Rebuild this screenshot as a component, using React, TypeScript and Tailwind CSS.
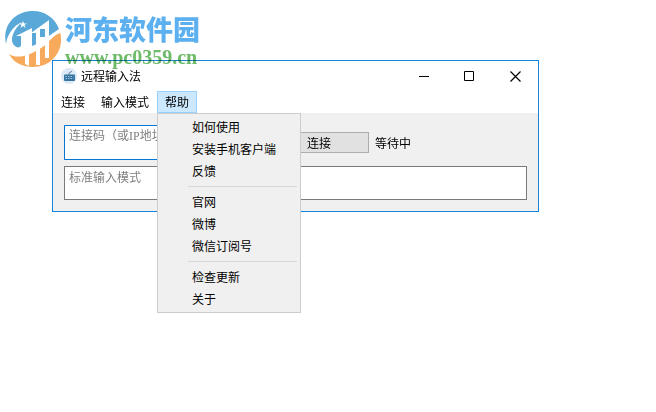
import React from "react";

const menuGroups: string[][] = [
  ["如何使用", "安装手机客户端", "反馈"],
  ["官网", "微博", "微信订阅号"],
  ["检查更新", "关于"],
];

function SiteLogo() {
  return (
    <svg className="h-14 w-14 shrink-0" viewBox="0 0 56 56" aria-hidden="true">
      <path d="M1 33C-3 14 10 0 28 0c12 0 22 7 26 18-5 3-9 8-13 13-8 9-20 14-31 12-5-1-7-4-6-9-1-1-2-2-3-1z" fill="#59a8d8" />
      <path d="M4 43c13 4 29-2 38-11 5-5 9-9 13-11 5 18-8 35-27 35-11 0-20-5-24-13z" fill="#f7aa5b" />
      <path d="M1 33C2 24 8 15 17 11 9 18 5 27 8 33c4 7 18 4 27-2 8-5 13-10 20-12v3c-6 2-10 7-15 12C27 44 13 49 4 43c-2-2-3-6-3-10z" fill="#fff" />
      <path d="M11 25 27 17v20l-17 2 6-4V25z" fill="#fff" />
      <path d="M26 22 44 9v38h-4V32h-5v22h-4V22z" fill="#fff" />
      <path d="M35 18h5v8h-5z" fill="#59a8d8" />
      <path d="M20 43h4v12l-4-2z" fill="#fff" />
      <path d="m18 10 1 2.500h3l-2.500 1.500 1 3-2.500-2-2.500 2 1-3-2.500-1.500h3z" fill="#fff" />
    </svg>
  );
}

function KeyboardIcon() {
  return (
    <svg className="h-4 w-4" viewBox="0 0 16 16" aria-hidden="true">
      <circle cx="8" cy="8" r="8" fill="#dce9f7" />
      <path d="M8 7V5.500c0-1.500 2.500-.5 2.500-2.500" fill="none" stroke="#52748f" />
      <rect x="3" y="6.500" width="11" height="6.500" rx="1" fill="#35739f" />
      <path d="M4.500 8.500h8M4.500 10.500h8" stroke="#a5c8e0" strokeDasharray="1.500 1" />
    </svg>
  );
}

function Watermark() {
  return (
    <div className="pointer-events-none absolute left-[5px] top-[11px] flex gap-1 mix-blend-multiply">
      <SiteLogo />
      <div className="whitespace-nowrap">
        <div className="font-['Noto_Sans_CJK_SC',sans-serif] text-[27px] font-black leading-9 text-[#5cb0ef]">河东软件园</div>
        <div className="font-['Liberation_Serif',serif] text-[20px] font-bold leading-5 text-[#6dbb68]">www.pc0359.cn</div>
      </div>
    </div>
  );
}

function TitleBar() {
  return (
    <header className="flex h-[30px] items-center justify-between pl-2">
      <div className="flex items-center gap-1">
        <KeyboardIcon />
        <h1>远程输入法</h1>
      </div>
      <div className="flex h-7">
        <button type="button" aria-label="最小化" className="flex w-[46px] items-center justify-center">
          <svg className="h-[11px] w-[11px]" viewBox="0 0 11 11"><path d="M1 5.500h10" stroke="#000" /></svg>
        </button>
        <button type="button" aria-label="最大化" className="flex w-[46px] items-center justify-center">
          <svg className="h-[11px] w-[11px]" viewBox="0 0 11 11"><path d="M.5.5h9v9h-9z" fill="none" stroke="#000" /></svg>
        </button>
        <button type="button" aria-label="关闭" className="flex w-[46px] items-center justify-center">
          <svg className="h-[11px] w-[11px]" viewBox="0 0 11 11"><path d="m.5.5 10 10m0-10-10 10" stroke="#000" strokeWidth="1.2" /></svg>
        </button>
      </div>
    </header>
  );
}

function HelpMenu() {
  return (
    <div role="menu" aria-label="帮助" className="absolute left-0 top-full z-10 w-36 border border-[#cccccc] bg-[#f0f0f0] py-0.5">
      {menuGroups.map((group, index) => (
        <React.Fragment key={group[0]}>
          {index > 0 && <hr className="my-1 ml-[30px] mr-[3px] border-[#d7d7d7]" />}
          {group.map((label) => (
            <button key={label} type="button" role="menuitem" className="block h-[22px] w-full pl-[34px] text-left leading-[22px]">
              {label}
            </button>
          ))}
        </React.Fragment>
      ))}
    </div>
  );
}

function MenuBar() {
  return (
    <nav className="flex h-[22px]">
      <button type="button" className="px-2">连接</button>
      <button type="button" className="px-2">输入模式</button>
      <div className="relative">
        <button type="button" aria-expanded="true" className="h-full border border-[#99d1ff] bg-[#cce8ff] px-[7px]">帮助</button>
        <HelpMenu />
      </div>
    </nav>
  );
}

export default function App() {
  return (
    <main className="relative min-h-screen bg-white pl-[52px] pr-4 pt-[60px] font-['Noto_Sans_CJK_SC',sans-serif] text-xs text-black">
      <section className="w-full max-w-[487px] border border-[#1883d7] bg-white">
        <TitleBar />
        <MenuBar />
        <div className="flex flex-col gap-1.5 bg-[#f0f0f0] px-[11px] pb-[11px] pt-3">
          <div className="flex items-center gap-1.5">
            <textarea
              aria-label="连接码"
              placeholder="连接码（或IP地址）"
              className="h-[35px] w-[199px] resize-none overflow-hidden border border-[#0078d7] bg-white px-1 py-0.5 font-['Liberation_Serif','Noto_Sans_CJK_SC',serif] leading-4 placeholder:text-[#808080]"
            />
            <button type="button" className="h-[21px] w-[100px] border border-[#adadad] bg-[#e1e1e1]">连接</button>
            <span role="status">等待中</span>
          </div>
          <textarea
            aria-label="标准输入模式"
            placeholder="标准输入模式"
            className="h-[34px] w-full resize-none overflow-hidden border border-[#7a7a7a] bg-white px-1 py-0.5 leading-4 placeholder:text-[#808080]"
          />
        </div>
      </section>
      <Watermark />
    </main>
  );
}
